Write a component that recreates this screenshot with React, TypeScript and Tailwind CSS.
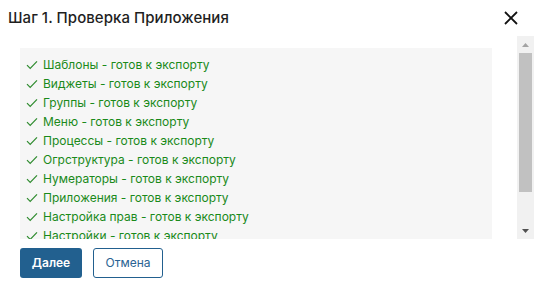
import React from 'react';

const items = [
  'Шаблоны',
  'Виджеты',
  'Группы',
  'Меню',
  'Процессы',
  'Огрструктура',
  'Нумераторы',
  'Приложения',
  'Настройка прав',
  'Настройки',
];

const Check = () => (
  <svg width="12" height="10" viewBox="0 0 12 10" className="shrink-0">
    <path d="M1 5.2 L4.2 8.4 L11 1.4" fill="none" stroke="#2e8b2e" strokeWidth="1.2" />
  </svg>
);

export default function App() {
  return (
    <div className="w-[534px] h-[283px] bg-white overflow-hidden" style={{ fontFamily: 'Inter, "Noto Sans", sans-serif' }}>
      <div className="flex items-center justify-between pl-2 pr-[16px] h-[36px]">
        <h1 className="text-[15px] font-medium tracking-[0.05px] text-[#1f1f1f]">Шаг 1. Проверка Приложения</h1>
        <button className="w-[14px] h-[14px] flex items-center justify-center">
          <svg width="14" height="14" viewBox="0 0 14 14">
            <path d="M1 1 L13 13 M13 1 L1 13" stroke="#111" strokeWidth="1.8" />
          </svg>
        </button>
      </div>

      <div className="flex h-[203px] pl-5">
        <div className="mt-3 w-[472px] h-[191px] bg-[#f6f6f6] overflow-hidden pt-[7px] pl-[6px]">
          {items.map((name) => (
            <div key={name} className="flex items-center gap-[5px] h-[19px] text-[12px] text-[#1a8a1a] whitespace-nowrap">
              <Check />
              <span>{name} - готов к экспорту</span>
            </div>
          ))}
        </div>
        <div className="ml-auto w-[17px] h-[203px] bg-[#f1f1f1] flex flex-col items-center">
          <div className="h-[17px] flex items-center justify-center">
            <svg width="7" height="4" viewBox="0 0 7 4"><path d="M3.5 0 L7 4 L0 4 Z" fill="#a3a3a3" /></svg>
          </div>
          <div className="w-[13px] h-[139px] bg-[#c1c1c1]" />
          <div className="flex-1" />
          <div className="h-[17px] flex items-center justify-center">
            <svg width="7" height="4" viewBox="0 0 7 4"><path d="M0 0 L7 0 L3.5 4 Z" fill="#505050" /></svg>
          </div>
        </div>
      </div>

      <div className="flex gap-[11px] pl-5 pt-[9px]">
        <button className="w-[62px] h-[30px] rounded-[3px] bg-[#22608f] text-white text-[12px] font-semibold">Далее</button>
        <button className="w-[70px] h-[30px] rounded-[3px] border border-[#22608f] text-[#2a6393] text-[12px]">Отмена</button>
      </div>
    </div>
  );
}
